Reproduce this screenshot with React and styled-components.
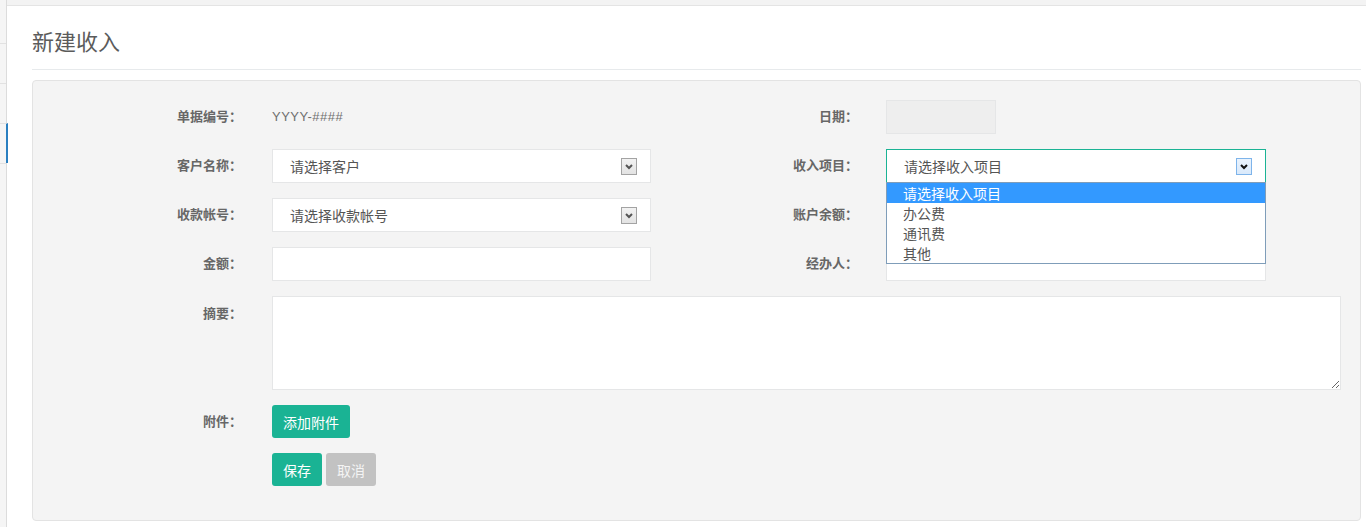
import styled, { createGlobalStyle } from "styled-components";

const GlobalStyle = createGlobalStyle`
  html, body {
    margin: 0;
    padding: 0;
    background: #ffffff;
    font-family: "Noto Sans CJK SC", "Liberation Sans", sans-serif;
    color: #676a6c;
  }
  * {
    box-sizing: border-box;
  }
`

const Page = styled.div`
  display: flex;
  width: 1366px;
  height: 527px;
  overflow: hidden;
`

const Sidebar = styled.div`
  width: 7px;
  flex-shrink: 0;
  background: #f5f5f5;
  border-right: 1px solid #dcdcdc;
  padding-top: 43px;
`

const SideItem = styled.div`
  height: 40px;
  border-top: 1px solid #e2e2e2;
  margin-right: ${(p) => (p.active ? "-2px" : "0")};
  border-right: ${(p) => (p.active ? "2px solid #2a7fc0" : "none")};
`

const Main = styled.div`
  flex: 1;
  display: flex;
  flex-direction: column;
`

const TopStrip = styled.div`
  height: 6px;
  background: #f3f3f3;
  border-bottom: 1px solid #e4e4e4;
`

const Content = styled.div`
  padding: 0 5px 0 25px;
`

const Header = styled.div`
  padding: 20px 0 15px;
  border-bottom: 1px solid #e7eaec;
`

const Title = styled.h2`
  margin: 0;
  font-size: 22px;
  line-height: 28px;
  font-weight: 400;
  color: #5b5b5b;
`

const Panel = styled.div`
  margin-top: 10px;
  background: #f4f4f4;
  border: 1px solid #e3e3e3;
  border-radius: 4px;
  padding: 19px 0 34px;
`

const Row = styled.div`
  display: flex;
  align-items: ${(p) => (p.top ? "flex-start" : "center")};
  margin-bottom: 15px;

  &:last-child {
    margin-bottom: 0;
  }
`

const Group = styled.div`
  display: flex;
  align-items: ${(p) => (p.top ? "flex-start" : "center")};
`

const Label = styled.label`
  width: ${(p) => p.w}px;
  flex-shrink: 0;
  text-align: right;
  font-size: 13px;
  font-weight: 700;
  color: #676767;
  padding-top: ${(p) => (p.top ? "7px" : "0")};
  padding-bottom: ${(p) => (p.top ? "0" : "3px")};
  margin-right: ${(p) => p.gap}px;
`

const Value = styled.div`
  font-family: "Liberation Sans", sans-serif;
  font-size: 13px;
  letter-spacing: 0.5px;
  color: #707070;
  width: 379px;
  padding-bottom: 2px;
`

const Input = styled.input`
  width: ${(p) => p.w || 379}px;
  height: 34px;
  border: 1px solid #e5e6e7;
  background: ${(p) => (p.disabled ? "#eeeeee" : "#ffffff")};
  outline: none;
  padding: 6px 12px;
  font-size: 14px;
  font-family: inherit;
`

const SelectWrap = styled.div`
  position: relative;
  width: ${(p) => p.w}px;
`

const SelectBox = styled.div`
  height: 34px;
  display: flex;
  align-items: center;
  justify-content: space-between;
  background: #ffffff;
  border: 1px solid ${(p) => (p.open ? "#1ab394" : "#e5e6e7")};
  padding: 0 13px 0 17px;
  font-size: 14px;
  color: #555555;
`

const ArrowBtn = styled.div`
  width: 16px;
  height: 17px;
  display: flex;
  align-items: center;
  justify-content: center;
  border: 1px solid ${(p) => (p.open ? "#7eb4ea" : "#a3a3a3")};
  background: ${(p) =>
    p.open
      ? "linear-gradient(#eaf3fd, #d9e9fb)"
      : "linear-gradient(#f2f2f2, #e3e3e3)"};
  margin-top: 1px;
`

const DropList = styled.ul`
  position: absolute;
  left: 0;
  right: 0;
  top: calc(100% - 1px);
  margin: 0;
  padding: 0;
  list-style: none;
  background: #ffffff;
  border: 1px solid #7f9db9;
  z-index: 5;
`

const Option = styled.li`
  height: 20px;
  line-height: 20px;
  padding-left: 16px;
  font-size: 14px;
  color: ${(p) => (p.active ? "#ffffff" : "#555555")};
  background: ${(p) => (p.active ? "#3399ff" : "transparent")};
`

const TextArea = styled.textarea`
  display: block;
  width: 1069px;
  height: 94px;
  border: 1px solid #e5e6e7;
  background: #ffffff;
  outline: none;
  padding: 6px 12px;
  font-family: inherit;
  font-size: 13px;
`

const Buttons = styled.div`
  display: flex;
  gap: 4px;
`

const Button = styled.button`
  height: 33px;
  padding: 0 11px;
  border: none;
  border-radius: 3px;
  background: ${(p) => (p.muted ? "#c2c2c2" : "#1ab394")};
  color: ${(p) => (p.muted ? "#f4f4f4" : "#ffffff")};
  font-family: inherit;
  font-size: 14px;
  cursor: pointer;
`

const Chevron = ({ dark }) => (
  <svg width="8" height="6" viewBox="0 0 8 6">
    <polyline
      points="1,1 4,4 7,1"
      fill="none"
      stroke={dark ? "#111" : "#555"}
      strokeWidth="2"
    />
  </svg>
)

const Select = ({ w, text, open, options }) => (
  <SelectWrap w={w}>
    <SelectBox open={open}>
      <span>{text}</span>
      <ArrowBtn open={open}>
        <Chevron dark={open}/>
      </ArrowBtn>
    </SelectBox>
    {open && (
      <DropList>
        {options.map((o, i) =>
          <Option key={o} active={i === 0}>{o}</Option>
        )}
      </DropList>
    )}
  </SelectWrap>
)

const App = () => {

    const incomeItems = ["请选择收入项目", "办公费", "通讯费", "其他"]

    return (
        <Page>
            <GlobalStyle/>
            <Sidebar>
                <SideItem/>
                <SideItem/>
                <SideItem active/>
                <SideItem/>
            </Sidebar>
            <Main>
                <TopStrip/>
                <Content>
                    <Header>
                        <Title>新建收入</Title>
                    </Header>
                    <Panel>
                        <Row>
                            <Group>
                                <Label w={209} gap={30}>单据编号：</Label>
                                <Value>YYYY-####</Value>
                            </Group>
                            <Group>
                                <Label w={207} gap={28}>日期：</Label>
                                <Input w={110} disabled/>
                            </Group>
                        </Row>
                        <Row>
                            <Group>
                                <Label w={209} gap={30}>客户名称：</Label>
                                <Select w={379} text="请选择客户"/>
                            </Group>
                            <Group>
                                <Label w={207} gap={28}>收入项目：</Label>
                                <Select w={380} text="请选择收入项目" open options={incomeItems}/>
                            </Group>
                        </Row>
                        <Row>
                            <Group>
                                <Label w={209} gap={30}>收款帐号：</Label>
                                <Select w={379} text="请选择收款帐号"/>
                            </Group>
                            <Group>
                                <Label w={207} gap={28}>账户余额：</Label>
                                <Input w={380}/>
                            </Group>
                        </Row>
                        <Row>
                            <Group>
                                <Label w={209} gap={30}>金额：</Label>
                                <Input w={379}/>
                            </Group>
                            <Group>
                                <Label w={207} gap={28}>经办人：</Label>
                                <Input w={380}/>
                            </Group>
                        </Row>
                        <Row top>
                            <Group top>
                                <Label w={209} gap={30} top>摘要：</Label>
                                <TextArea/>
                            </Group>
                        </Row>
                        <Row>
                            <Group>
                                <Label w={209} gap={30}>附件：</Label>
                                <Button>添加附件</Button>
                            </Group>
                        </Row>
                        <Row>
                            <Group>
                                <Label w={209} gap={30}></Label>
                                <Buttons>
                                    <Button>保存</Button>
                                    <Button muted>取消</Button>
                                </Buttons>
                            </Group>
                        </Row>
                    </Panel>
                </Content>
            </Main>
        </Page>
    )
}

export default App
